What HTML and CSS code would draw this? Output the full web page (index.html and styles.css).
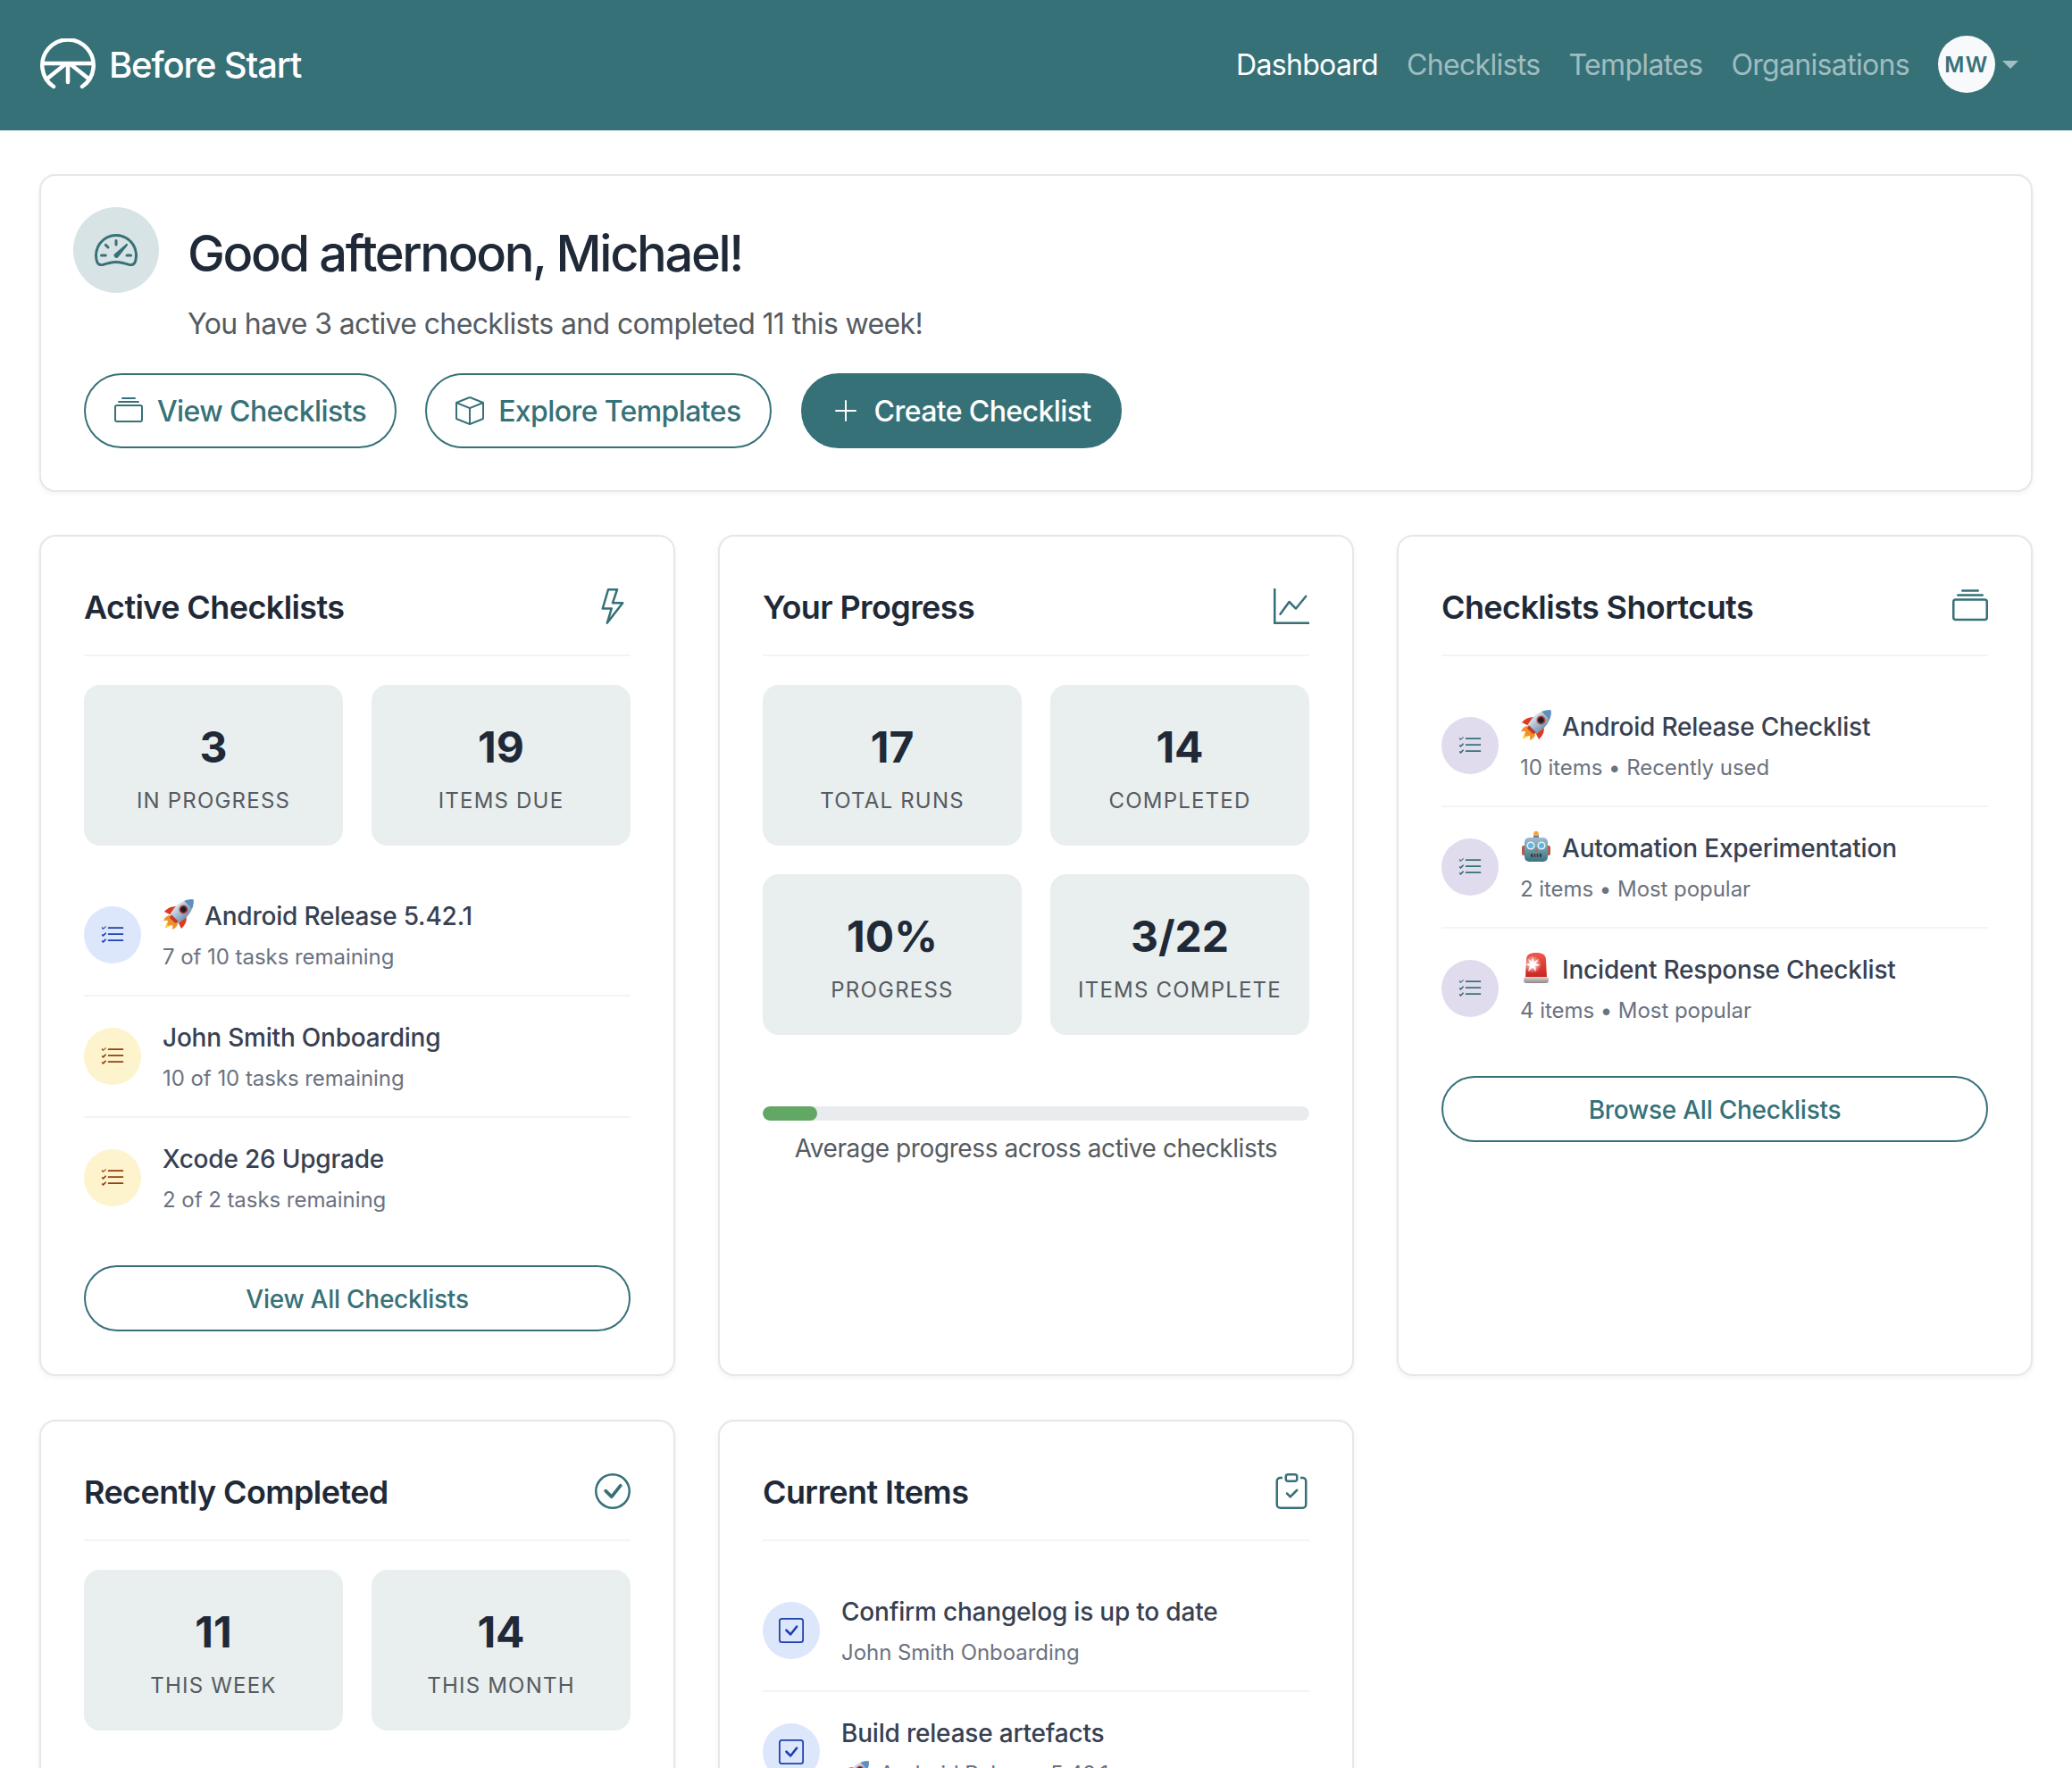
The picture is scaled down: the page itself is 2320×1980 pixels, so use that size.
FILE: index.html
```html
<!DOCTYPE html>
<html lang="en">
<head>
  <meta charset="UTF-8">
  <title>Before Start - Dashboard</title>
  <link rel="stylesheet" href="styles.css">
</head>
<body>
  <!-- Shared icons -->
  <svg class="sprite" xmlns="http://www.w3.org/2000/svg">
    <defs>
      <linearGradient id="g-robot" x1="0" y1="0" x2="0" y2="1">
        <stop offset="0" stop-color="#9cbdd0"/>
        <stop offset="1" stop-color="#3a7480"/>
      </linearGradient>
      <linearGradient id="g-siren" x1="0" y1="0" x2="0" y2="1">
        <stop offset="0" stop-color="#ee5a4c"/>
        <stop offset="1" stop-color="#c9241f"/>
      </linearGradient>
      <linearGradient id="g-base" x1="0" y1="0" x2="0" y2="1">
        <stop offset="0" stop-color="#dcd8d4"/>
        <stop offset="1" stop-color="#8e8987"/>
      </linearGradient>
      <linearGradient id="g-rocket" x1="0" y1="0" x2="1" y2="0">
        <stop offset="0" stop-color="#d6e2ec"/>
        <stop offset="1" stop-color="#7593b0"/>
      </linearGradient>
      <radialGradient id="g-flash">
        <stop offset="0" stop-color="#fff"/>
        <stop offset="1" stop-color="#fff" stop-opacity="0"/>
      </radialGradient>
    </defs>
    <symbol id="i-collection" viewBox="0 0 16 16"><path d="M2.5 3.5a.5.5 0 0 1 0-1h11a.5.5 0 0 1 0 1zm2-2a.5.5 0 0 1 0-1h7a.5.5 0 0 1 0 1zM0 13a1.5 1.5 0 0 0 1.5 1.5h13A1.5 1.5 0 0 0 16 13V6a1.5 1.5 0 0 0-1.5-1.5h-13A1.5 1.5 0 0 0 0 6zm1.5.5A.5.5 0 0 1 1 13V6a.5.5 0 0 1 .5-.5h13a.5.5 0 0 1 .5.5v7a.5.5 0 0 1-.5.5z"/></symbol>
    <symbol id="i-box" viewBox="0 0 16 16"><path d="M8.186 1.113a.5.5 0 0 0-.372 0L1.846 3.5 8 5.961 14.154 3.5zM15 4.239l-6.5 2.6v7.922l6.5-2.6V4.24zM7.5 14.762V6.838L1 4.239v7.925zM7.443.184a1.5 1.5 0 0 1 1.114 0l7.129 2.852A.5.5 0 0 1 16 3.5v8.662a1 1 0 0 1-.629.928l-7.185 2.874a.5.5 0 0 1-.372 0L.63 13.09a1 1 0 0 1-.63-.928V3.5a.5.5 0 0 1 .314-.464z"/></symbol>
    <symbol id="i-plus" viewBox="0 0 16 16"><path d="M8 2a.5.5 0 0 1 .5.5v5h5a.5.5 0 0 1 0 1h-5v5a.5.5 0 0 1-1 0v-5h-5a.5.5 0 0 1 0-1h5v-5A.5.5 0 0 1 8 2"/></symbol>
    <symbol id="i-lightning" viewBox="0 0 16 16"><path d="M5.52.359A.5.5 0 0 1 6 0h4a.5.5 0 0 1 .474.658L8.694 6H12.5a.5.5 0 0 1 .395.807l-7 9a.5.5 0 0 1-.873-.454L6.823 9.5H3.5a.5.5 0 0 1-.48-.641zM6.374 1 4.168 8.5H7.5a.5.5 0 0 1 .478.647L6.78 13.04 11.478 7H8a.5.5 0 0 1-.474-.658L9.306 1z"/></symbol>
    <symbol id="i-graph" viewBox="0 0 16 16"><path fill-rule="evenodd" d="M0 0h1v15h15v1H0zm14.817 3.113a.5.5 0 0 1 .07.704l-4.5 5.5a.5.5 0 0 1-.74.037L7.06 6.767l-3.656 5.027a.5.5 0 0 1-.808-.588l4-5.5a.5.5 0 0 1 .758-.06l2.609 2.61 4.15-5.073a.5.5 0 0 1 .704-.07"/></symbol>
    <symbol id="i-check-circle" viewBox="0 0 16 16"><path d="M8 15A7 7 0 1 1 8 1a7 7 0 0 1 0 14m0 1A8 8 0 1 0 8 0a8 8 0 0 0 0 16"/><path d="m10.97 4.97-.02.022-3.473 4.425-2.093-2.094a.75.75 0 0 0-1.06 1.06L6.97 11.03a.75.75 0 0 0 1.079-.02l3.992-4.99a.75.75 0 0 0-1.071-1.05"/></symbol>
    <symbol id="i-clipboard" viewBox="0 0 16 16"><path fill-rule="evenodd" d="M10.854 7.146a.5.5 0 0 1 0 .708l-3 3a.5.5 0 0 1-.708 0l-1.5-1.5a.5.5 0 1 1 .708-.708L7.5 9.793l2.646-2.647a.5.5 0 0 1 .708 0"/><path d="M4 1.5H3a2 2 0 0 0-2 2V14a2 2 0 0 0 2 2h10a2 2 0 0 0 2-2V3.5a2 2 0 0 0-2-2h-1v1h1a1 1 0 0 1 1 1V14a1 1 0 0 1-1 1H3a1 1 0 0 1-1-1V3.5a1 1 0 0 1 1-1h1z"/><path d="M9.5 1a.5.5 0 0 1 .5.5v1a.5.5 0 0 1-.5.5h-3a.5.5 0 0 1-.5-.5v-1a.5.5 0 0 1 .5-.5zm-3-1A1.5 1.5 0 0 0 5 1.5v1A1.5 1.5 0 0 0 6.5 4h3A1.5 1.5 0 0 0 11 2.5v-1A1.5 1.5 0 0 0 9.5 0z"/></symbol>
    <symbol id="i-list-check" viewBox="0 0 16 16"><path fill-rule="evenodd" d="M5 11.5a.5.5 0 0 1 .5-.5h9a.5.5 0 0 1 0 1h-9a.5.5 0 0 1-.5-.5m0-4a.5.5 0 0 1 .5-.5h9a.5.5 0 0 1 0 1h-9a.5.5 0 0 1-.5-.5m0-4a.5.5 0 0 1 .5-.5h9a.5.5 0 0 1 0 1h-9a.5.5 0 0 1-.5-.5M3.854 2.146a.5.5 0 0 1 0 .708l-1.5 1.5a.5.5 0 0 1-.708 0l-.5-.5a.5.5 0 1 1 .708-.708L2 3.793l1.146-1.147a.5.5 0 0 1 .708 0m0 4a.5.5 0 0 1 0 .708l-1.5 1.5a.5.5 0 0 1-.708 0l-.5-.5a.5.5 0 1 1 .708-.708L2 7.793l1.146-1.147a.5.5 0 0 1 .708 0m0 4a.5.5 0 0 1 0 .708l-1.5 1.5a.5.5 0 0 1-.708 0l-.5-.5a.5.5 0 0 1 .708-.708l.146.147 1.146-1.147a.5.5 0 0 1 .708 0"/></symbol>
    <symbol id="i-check-square" viewBox="0 0 16 16"><path d="M14 1a1 1 0 0 1 1 1v12a1 1 0 0 1-1 1H2a1 1 0 0 1-1-1V2a1 1 0 0 1 1-1zM2 0a2 2 0 0 0-2 2v12a2 2 0 0 0 2 2h12a2 2 0 0 0 2-2V2a2 2 0 0 0-2-2z"/><path d="M10.97 4.97a.75.75 0 0 1 1.071 1.05l-3.992 4.99a.75.75 0 0 1-1.08.02L4.324 8.384a.75.75 0 1 1 1.06-1.06l2.094 2.093 3.473-4.425z"/></symbol>
    <symbol id="i-speedometer" viewBox="0 0 16 16"><path d="M8 4a.5.5 0 0 1 .5.5V6a.5.5 0 0 1-1 0V4.5A.5.5 0 0 1 8 4M3.732 5.732a.5.5 0 0 1 .707 0l.915.914a.5.5 0 1 1-.708.708l-.914-.915a.5.5 0 0 1 0-.707M2 10a.5.5 0 0 1 .5-.5h1.586a.5.5 0 0 1 0 1H2.5A.5.5 0 0 1 2 10m9.5 0a.5.5 0 0 1 .5-.5h1.5a.5.5 0 0 1 0 1H12a.5.5 0 0 1-.5-.5m.754-4.246a.389.389 0 0 0-.527-.02L7.547 9.31a.91.91 0 1 0 1.302 1.258l3.434-4.297a.39.39 0 0 0-.029-.518z"/><path fill-rule="evenodd" d="M0 10a8 8 0 1 1 15.547 2.661c-.442 1.253-1.845 1.602-2.932 1.25C11.309 13.488 9.475 13 8 13c-1.474 0-3.31.488-4.615.911-1.087.352-2.49.003-2.932-1.25A8 8 0 0 1 0 10m8-7a7 7 0 0 0-6.603 9.329c.203.575.923.876 1.68.63C4.397 12.533 6.358 12 8 12s3.604.532 4.923.96c.757.245 1.477-.056 1.68-.631A7 7 0 0 0 8 3"/></symbol>

    <!-- Emoji used in checklist names -->
    <symbol id="e-rocket" viewBox="0 4 32 32">
      <g transform="rotate(45 18 18)">
        <path d="M18 28c-4 3-3 7 0 12 3-5 4-9 0-12z" fill="#f8d24a"/>
        <path d="M13 27c-2 2-3 5-1 9 1-2 2-3 3-3 1 1 2 2 3 4 1-2 2-3 3-4 1 0 2 1 3 3 2-4 1-7-1-9z" fill="#f0902a"/>
        <path d="M11 17c-4 3-5 7-5 12l6-2z" fill="#dc3a22"/>
        <path d="M25 17c4 3 5 7 5 12l-6-2z" fill="#dc3a22"/>
        <path d="M18 0c5 4 7.5 11 7.5 17 0 4-1 8-2 11h-11c-1-3-2-7-2-11 0-6 2.5-13 7.5-17z" fill="url(#g-rocket)"/>
        <path d="M18 0c2.5 2 4.3 4.6 5.5 7.5h-11c1.2-2.9 3-5.5 5.5-7.5z" fill="#5d8fc0"/>
        <path d="M13 26h10l-1 3.5h-8z" fill="#c23a2b"/>
        <circle cx="18" cy="14" r="4.4" fill="#b5413a"/>
        <circle cx="18" cy="14" r="2.9" fill="#1c1f2b"/>
      </g>
    </symbol>
    <symbol id="e-robot" viewBox="0 0 36 36">
      <rect x="15" y="5" width="6" height="4" rx="1" fill="#7f6fa0"/>
      <circle cx="18" cy="3.5" r="2.8" fill="#efa93a"/>
      <rect x="2" y="17" width="5" height="11" rx="2" fill="#b55a4c"/>
      <rect x="29" y="17" width="5" height="11" rx="2" fill="#b55a4c"/>
      <rect x="5" y="8" width="26" height="27" rx="5" fill="url(#g-robot)"/>
      <circle cx="12" cy="17" r="4.6" fill="#e8f0f4"/>
      <circle cx="24" cy="17" r="4.6" fill="#e8f0f4"/>
      <circle cx="12" cy="17" r="3" fill="#5fb4de"/>
      <circle cx="24" cy="17" r="3" fill="#5fb4de"/>
      <path d="M18 20l1.8 3.5h-3.6z" fill="#d9574a"/>
      <rect x="12" y="26" width="12" height="4" rx="1" fill="#2c3a42"/>
      <path d="M15 26v4M18 26v4M21 26v4" stroke="#a8bcc6" stroke-width=".8"/>
    </symbol>
    <symbol id="e-siren" viewBox="0 0 36 36">
      <path d="M6 29L7 9C7 3 11 1 18 1s11 2 11 8l1 20z" fill="url(#g-siren)"/>
      <circle cx="14" cy="14" r="10" fill="url(#g-flash)"/>
      <path d="M14 5l1.5 6.5L21 8l-3.500 5 5.500 2-6 1 1 6-4-4.500L9 22l2-6-5-2 5.500-1L9 8l4 3z" fill="#fff"/>
      <rect x="4" y="28" width="28" height="7" rx="3" fill="url(#g-base)"/>
    </symbol>
  </svg>

  <!-- Header -->
  <header class="header">
    <div class="logo">
      <svg class="logo-mark" width="62" height="58" viewBox="0 0 62 58" stroke="currentColor" stroke-width="4.5" stroke-linecap="round">
        <path d="M15 54A28.7 28.7 0 1 1 47 54"/>
        <path d="M3 28H59"/>
        <path d="M31 29V49M28 29L8 45M34 29L54 45"/>
      </svg>
      Before Start
    </div>
    <nav class="nav">
      <a class="active" href="#dashboard">Dashboard</a>
      <a href="#checklists">Checklists</a>
      <a href="#templates">Templates</a>
      <a href="#organisations">Organisations</a>
      <span class="avatar">MW</span>
      <span class="caret"></span>
    </nav>
  </header>

  <main class="page">
    <!-- Welcome -->
    <section class="card hero">
      <div class="hero-head">
        <span class="hero-icon"><svg class="icon-48"><use href="#i-speedometer"/></svg></span>
        <div>
          <h1>Good afternoon, Michael!</h1>
          <p>You have 3 active checklists and completed 11 this week!</p>
        </div>
      </div>
      <div class="hero-actions">
        <a class="btn" href="#checklists"><svg class="icon-32"><use href="#i-collection"/></svg>View Checklists</a>
        <a class="btn" href="#templates"><svg class="icon-32"><use href="#i-box"/></svg>Explore Templates</a>
        <a class="btn btn-solid" href="#new"><svg class="icon-32"><use href="#i-plus"/></svg>Create Checklist</a>
      </div>
    </section>

    <div class="grid">
      <!-- Active Checklists -->
      <section class="card panel">
        <div class="panel-head">
          <h2>Active Checklists</h2>
          <svg class="icon-40"><use href="#i-lightning"/></svg>
        </div>
        <div class="stats">
          <div class="stat"><strong>3</strong><span>In Progress</span></div>
          <div class="stat"><strong>19</strong><span>Items Due</span></div>
        </div>
        <ul class="rows">
          <li class="row">
            <span class="row-icon blue"><svg class="icon-28"><use href="#i-list-check"/></svg></span>
            <div>
              <div class="row-title"><svg class="emoji"><use href="#e-rocket"/></svg>Android Release 5.42.1</div>
              <div class="row-sub">7 of 10 tasks remaining</div>
            </div>
          </li>
          <li class="row">
            <span class="row-icon yellow"><svg class="icon-28"><use href="#i-list-check"/></svg></span>
            <div>
              <div class="row-title">John Smith Onboarding</div>
              <div class="row-sub">10 of 10 tasks remaining</div>
            </div>
          </li>
          <li class="row">
            <span class="row-icon yellow"><svg class="icon-28"><use href="#i-list-check"/></svg></span>
            <div>
              <div class="row-title">Xcode 26 Upgrade</div>
              <div class="row-sub">2 of 2 tasks remaining</div>
            </div>
          </li>
        </ul>
        <a class="btn-wide" href="#checklists">View All Checklists</a>
      </section>

      <!-- Your Progress -->
      <section class="card panel">
        <div class="panel-head">
          <h2>Your Progress</h2>
          <svg class="icon-40"><use href="#i-graph"/></svg>
        </div>
        <div class="stats">
          <div class="stat"><strong>17</strong><span>Total Runs</span></div>
          <div class="stat"><strong>14</strong><span>Completed</span></div>
          <div class="stat"><strong>10%</strong><span>Progress</span></div>
          <div class="stat"><strong>3/22</strong><span>Items Complete</span></div>
        </div>
        <div class="progress"><div class="progress-fill" style="width: 10%"></div></div>
        <p class="progress-note">Average progress across active checklists</p>
      </section>

      <!-- Checklists Shortcuts -->
      <section class="card panel">
        <div class="panel-head">
          <h2>Checklists Shortcuts</h2>
          <svg class="icon-40"><use href="#i-collection"/></svg>
        </div>
        <ul class="rows">
          <li class="row">
            <span class="row-icon purple"><svg class="icon-28"><use href="#i-list-check"/></svg></span>
            <div>
              <div class="row-title"><svg class="emoji"><use href="#e-rocket"/></svg>Android Release Checklist</div>
              <div class="row-sub">10 items &bull; Recently used</div>
            </div>
          </li>
          <li class="row">
            <span class="row-icon purple"><svg class="icon-28"><use href="#i-list-check"/></svg></span>
            <div>
              <div class="row-title"><svg class="emoji"><use href="#e-robot"/></svg>Automation Experimentation</div>
              <div class="row-sub">2 items &bull; Most popular</div>
            </div>
          </li>
          <li class="row">
            <span class="row-icon purple"><svg class="icon-28"><use href="#i-list-check"/></svg></span>
            <div>
              <div class="row-title"><svg class="emoji"><use href="#e-siren"/></svg>Incident Response Checklist</div>
              <div class="row-sub">4 items &bull; Most popular</div>
            </div>
          </li>
        </ul>
        <a class="btn-wide" href="#checklists">Browse All Checklists</a>
      </section>

      <!-- Recently Completed -->
      <section class="card panel">
        <div class="panel-head">
          <h2>Recently Completed</h2>
          <svg class="icon-40"><use href="#i-check-circle"/></svg>
        </div>
        <div class="stats">
          <div class="stat"><strong>11</strong><span>This Week</span></div>
          <div class="stat"><strong>14</strong><span>This Month</span></div>
        </div>
      </section>

      <!-- Current Items -->
      <section class="card panel">
        <div class="panel-head">
          <h2>Current Items</h2>
          <svg class="icon-40"><use href="#i-clipboard"/></svg>
        </div>
        <ul class="rows">
          <li class="row">
            <span class="row-icon blue"><svg class="icon-28"><use href="#i-check-square"/></svg></span>
            <div>
              <div class="row-title">Confirm changelog is up to date</div>
              <div class="row-sub">John Smith Onboarding</div>
            </div>
          </li>
          <li class="row">
            <span class="row-icon blue"><svg class="icon-28"><use href="#i-check-square"/></svg></span>
            <div>
              <div class="row-title">Build release artefacts</div>
              <div class="row-sub"><svg class="emoji-sm"><use href="#e-rocket"/></svg>Android Release 5.42.1</div>
            </div>
          </li>
        </ul>
      </section>
    </div>
  </main>
</body>
</html>
```

FILE: styles.css
```css
/* Global Styles */
html,
body {
  height: 100%;
  overflow: hidden;
}

body {
  margin: 0;
  font-family: 'Inter', 'Liberation Sans', sans-serif;
  background-color: #fff;
  color: #1f2937;
}

a {
  text-decoration: none;
}

svg {
  fill: currentColor;
  flex-shrink: 0;
}

/* Holds the symbols and gradients, takes no room */
.sprite {
  display: block;
  width: 0;
  height: 0;
}

.icon-28 { width: 28px; height: 28px; }
.icon-32 { width: 32px; height: 32px; }
.icon-48 { width: 48px; height: 48px; }
.icon-40 { width: 40px; height: 40px; color: #367178; }

/* Header */
.header {
  display: flex;
  justify-content: space-between;
  align-items: center;
  height: 146px;
  padding: 0 60px 2px 45px;
  box-sizing: border-box;
  background-color: #367178;
  color: #fff;
}

.logo {
  display: flex;
  align-items: center;
  gap: 15px;
  font-size: 40px;
  font-weight: 500;
  letter-spacing: -1.15px;
}

.logo-mark {
  fill: none;
}

.nav {
  display: flex;
  align-items: center;
  gap: 32px;
  font-size: 32px;
  letter-spacing: -0.67px;
}

.nav a {
  color: rgba(255, 255, 255, 0.55);
}

.nav a.active {
  color: #fff;
}

.avatar {
  display: flex;
  align-items: center;
  justify-content: center;
  width: 64px;
  height: 64px;
  border-radius: 50%;
  background-color: #f8f9fa;
  color: #367178;
  font-size: 24px;
  font-weight: 600;
  letter-spacing: 1.5px;
}

.caret {
  width: 0;
  height: 0;
  margin-left: -24px;
  border-top: 9px solid rgba(255, 255, 255, 0.55);
  border-left: 9px solid transparent;
  border-right: 9px solid transparent;
}

/* Page */
.page {
  padding: 49px 44px 0;
}

.card {
  box-sizing: border-box;
  background-color: #fff;
  border: 2px solid #e5e7eb;
  border-radius: 18px;
  box-shadow: 0 2px 6px rgba(0, 0, 0, 0.05);
}

/* Hero */
.hero {
  height: 356px;
  padding: 35px 36px 0;
}

.hero-head {
  display: flex;
  gap: 32px;
}

.hero-icon {
  display: flex;
  align-items: center;
  justify-content: center;
  width: 96px;
  height: 96px;
  border-radius: 50%;
  background-color: #d7e3e4;
  color: #367178;
}

.hero h1 {
  margin: 19px 0 0;
  font-size: 56px;
  line-height: 67px;
  font-weight: 550;
  letter-spacing: -2.35px;
}

.hero p {
  margin: 21px 0 0;
  font-size: 32px;
  line-height: 48px;
  letter-spacing: -0.63px;
  color: #555b61;
}

.hero-actions {
  display: flex;
  gap: 32px;
  margin: 31px 0 0 12px;
}

.btn {
  display: flex;
  align-items: center;
  gap: 16px;
  height: 84px;
  box-sizing: border-box;
  padding: 0 32px;
  border: 2px solid #367178;
  border-radius: 42px;
  color: #367178;
  font-size: 32px;
  font-weight: 500;
  letter-spacing: -0.6px;
}

.btn-solid {
  margin-left: 1px;
  background-color: #367178;
  color: #fff;
}

/* Panels */
.grid {
  display: grid;
  grid-template-columns: repeat(3, 1fr);
  gap: 49px 48px;
  margin-top: 48px;
}

.panel {
  display: flex;
  flex-direction: column;
  padding: 48px;
}

.panel-head {
  display: flex;
  justify-content: space-between;
  align-items: center;
  height: 59px;
  padding-bottom: 25px;
  border-bottom: 2px solid #f3f4f6;
}

.panel h2 {
  margin: 2px 0 0;
  font-size: 36px;
  font-weight: 600;
  letter-spacing: -0.6px;
}

.stats {
  display: grid;
  grid-template-columns: 1fr 1fr;
  gap: 32px;
  margin-top: 32px;
}

.stat {
  display: flex;
  flex-direction: column;
  align-items: center;
  height: 180px;
  padding-top: 41px;
  box-sizing: border-box;
  border-radius: 18px;
  background-color: #e9eeee;
}

.stat strong {
  font-size: 48px;
  line-height: 58px;
  font-weight: 700;
}

.stat span {
  margin-top: 16px;
  font-size: 24px;
  line-height: 30px;
  letter-spacing: 1.2px;
  text-transform: uppercase;
  color: #555b61;
}

/* Lists */
.rows {
  list-style: none;
  margin: 33px 0 0;
  padding: 0;
}

.row {
  display: flex;
  align-items: center;
  gap: 24px;
  height: 136px;
  box-sizing: border-box;
  border-bottom: 2px solid #f3f4f6;
}

.row:last-child {
  height: 134px;
  border-bottom: 0;
}

.row-icon {
  display: flex;
  align-items: center;
  justify-content: center;
  width: 64px;
  height: 64px;
  border-radius: 50%;
}

.blue { background-color: #dde7fb; color: #1e40af; }
.yellow { background-color: #fdf3cd; color: #92400e; }
.purple { background-color: #e0dcee; color: #367178; }

.row-title {
  display: flex;
  align-items: center;
  gap: 11px;
  height: 42px;
  font-size: 28px;
  font-weight: 500;
  letter-spacing: -0.2px;
  color: #374151;
}

.row-sub {
  display: flex;
  align-items: center;
  gap: 11px;
  height: 36px;
  margin-top: 7px;
  font-size: 24px;
  letter-spacing: -0.05px;
  color: #6b7280;
}

.emoji {
  width: 36px;
  height: 36px;
  margin-top: -4px;
}

.emoji-sm {
  width: 32px;
  height: 32px;
}

.btn-wide {
  display: flex;
  align-items: center;
  justify-content: center;
  height: 74px;
  margin-top: 31px;
  padding-top: 2px;
  border: 2px solid #367178;
  border-radius: 37px;
  box-sizing: border-box;
  color: #367178;
  font-size: 28px;
  font-weight: 500;
  letter-spacing: -0.25px;
}

/* Progress */
.progress {
  height: 16px;
  margin-top: 80px;
  border-radius: 8px;
  background-color: #e9ecef;
  overflow: hidden;
}

.progress-fill {
  height: 100%;
  border-radius: 8px;
  background-color: #62a763;
}

.progress-note {
  margin: 10px 0 0;
  text-align: center;
  font-size: 28px;
  line-height: 42px;
  letter-spacing: -0.4px;
  color: #555b61;
}
```
